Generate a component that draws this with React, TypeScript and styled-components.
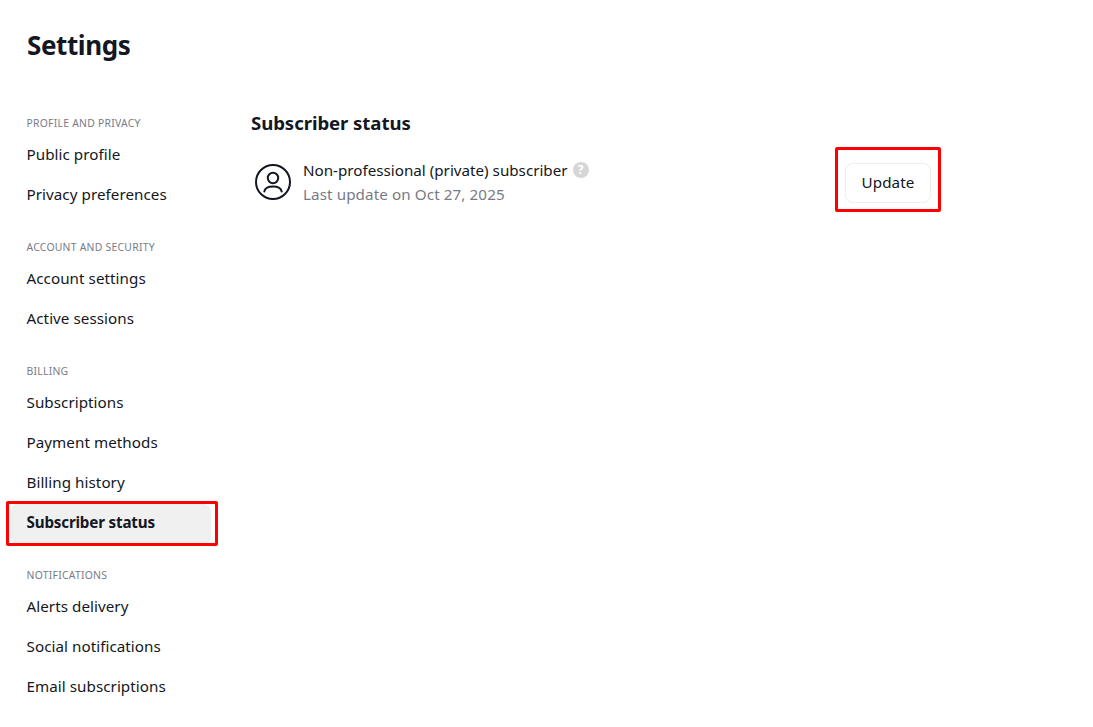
import React from "react";
import styled, { createGlobalStyle } from "styled-components";

const Global = createGlobalStyle`
  html, body { margin: 0; padding: 0; background: #fff; }
  body { font-family: "Noto Sans", "Liberation Sans", sans-serif; color: #131722; }
`;

const Page = styled.div`
  width: 1093px;
  height: 727px;
  overflow: hidden;
  display: flex;
  flex-direction: column;
`;

const Title = styled.h1`
  margin: 0;
  padding: 26px 0 0 27px;
  height: 88px;
  box-sizing: border-box;
  font-size: 26px;
  line-height: 38px;
  font-weight: 700;
  letter-spacing: -0.4px;
  color: #131722;
`;

const Body = styled.div`
  display: flex;
  align-items: flex-start;
`;

const Sidebar = styled.nav`
  width: 250px;
  flex: none;
  padding: 24px 0 0 10px;
  box-sizing: border-box;
  display: flex;
  flex-direction: column;
  gap: 20px;
`;

const Group = styled.div`
  display: flex;
  flex-direction: column;
`;

const GroupLabel = styled.div`
  height: 24px;
  padding-left: 16.5px;
  font-size: 10.4px;
  line-height: 22px;
  color: #787b86;
  text-transform: uppercase;
  letter-spacing: 0.25px;
`;

const Item = styled.div<{ $active?: boolean }>`
  position: relative;
  width: 201px;
  height: 40px;
  box-sizing: border-box;
  padding-left: 16.5px;
  border-radius: 8px;
  font-size: 15.2px;
  line-height: 36px;
  font-weight: ${(p) => (p.$active ? 700 : 400)};
  background: ${(p) => (p.$active ? "#f0f0f0" : "transparent")};
  color: #131722;
  letter-spacing: ${(p) => (p.$active ? "-0.18px" : "0.05px")};
`;

const Highlight = styled.span`
  position: absolute;
  box-sizing: border-box;
  border: 3px solid #ff0000;
  border-radius: 2px;
  pointer-events: none;
`;

const ItemHighlight = styled(Highlight)`
  left: -4px;
  top: -3px;
  width: 212px;
  height: 45px;
`;

const Content = styled.main`
  width: 681px;
  padding-top: 22px;
`;

const Heading = styled.h2`
  margin: 0 0 24px;
  padding-left: 1px;
  font-size: 18.6px;
  line-height: 26px;
  font-weight: 700;
  color: #131722;
  letter-spacing: -0.07px;
`;

const Row = styled.div`
  display: flex;
  align-items: center;
  justify-content: space-between;
`;

const Status = styled.div`
  display: flex;
  align-items: center;
  gap: 12px;
  padding-left: 5px;
`;

const IconBox = styled.div`
  display: flex;
  margin-bottom: 3px;
`;

const StatusText = styled.div`
  display: flex;
  flex-direction: column;
  margin-top: -2px;
`;

const StatusLine = styled.div`
  display: flex;
  align-items: center;
  gap: 5px;
  font-size: 15.2px;
  line-height: 24px;
  color: #131722;
`;

const Muted = styled.div`
  font-size: 15.2px;
  line-height: 24px;
  letter-spacing: 0.1px;
  color: #787b86;
`;

const Help = styled.span`
  width: 16px;
  height: 16px;
  border-radius: 50%;
  background: #d6d6d6;
  color: #fff;
  font-size: 12px;
  line-height: 16px;
  font-weight: 700;
  text-align: center;
`;

const ButtonWrap = styled.div`
  position: relative;
`;

const Button = styled.button`
  display: block;
  width: 86px;
  height: 40px;
  padding: 0 0 2px;
  background: #fff;
  border: 1px solid #ececec;
  border-radius: 8px;
  font-family: inherit;
  font-size: 15.2px;
  color: #131722;
  letter-spacing: 0.1px;
`;

const ButtonHighlight = styled(Highlight)`
  left: -10px;
  top: -16px;
  width: 106px;
  height: 65px;
`;

const UserIcon = () => (
  <IconBox>
    <svg width="36" height="36" viewBox="0 0 36 36" fill="none" stroke="#131722" strokeWidth="2">
      <circle cx="18" cy="18" r="17" />
      <circle cx="18" cy="14" r="5.2" />
      <path d="M9.3 27.5c.6-3 4-5 8.7-5s8.1 2 8.7 5" strokeLinecap="round" />
    </svg>
  </IconBox>
);

const groups: { label: string; items: string[] }[] = [
  { label: "Profile and privacy", items: ["Public profile", "Privacy preferences"] },
  { label: "Account and security", items: ["Account settings", "Active sessions"] },
  { label: "Billing", items: ["Subscriptions", "Payment methods", "Billing history", "Subscriber status"] },
  { label: "Notifications", items: ["Alerts delivery", "Social notifications", "Email subscriptions"] },
];

export default function App() {
  return (
    <Page>
      <Global />
      <Title>Settings</Title>
      <Body>
        <Sidebar>
          {groups.map((g) => (
            <Group key={g.label}>
              <GroupLabel>{g.label}</GroupLabel>
              {g.items.map((it) => (
                <Item key={it} $active={it === "Subscriber status"}>
                  {it}
                  {it === "Subscriber status" && <ItemHighlight />}
                </Item>
              ))}
            </Group>
          ))}
        </Sidebar>
        <Content>
          <Heading>Subscriber status</Heading>
          <Row>
            <Status>
              <UserIcon />
              <StatusText>
                <StatusLine>
                  Non-professional (private) subscriber
                  <Help>?</Help>
                </StatusLine>
                <Muted>Last update on Oct 27, 2025</Muted>
              </StatusText>
            </Status>
            <ButtonWrap>
              <Button>Update</Button>
              <ButtonHighlight />
            </ButtonWrap>
          </Row>
        </Content>
      </Body>
    </Page>
  );
}
